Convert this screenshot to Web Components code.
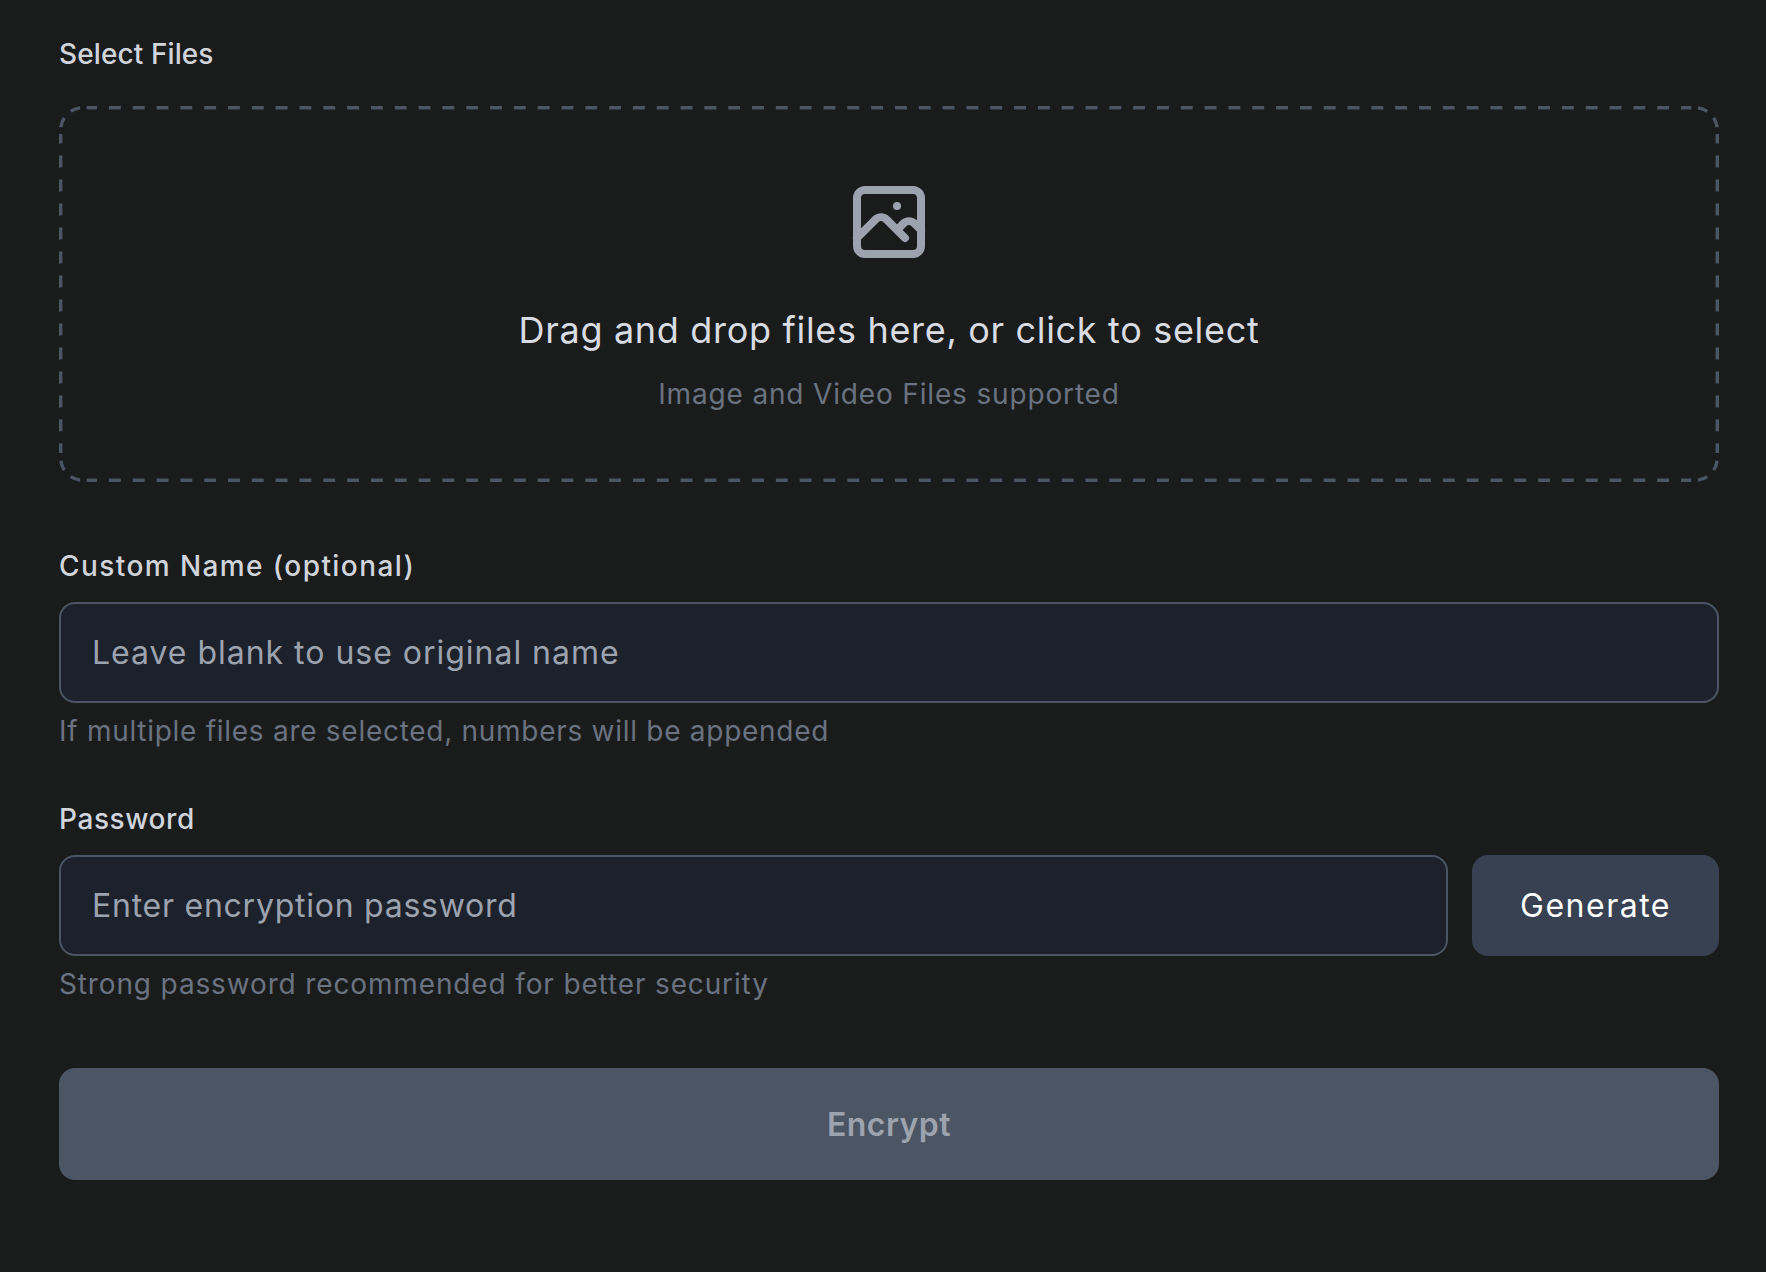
<!DOCTYPE html>
<html lang="en">
<head>
<meta charset="utf-8">
<title>Encrypt</title>
<style>
  html, body { margin: 0; background: #1a1c1c; }
  body { font-family: "Inter", "Liberation Sans", sans-serif; }
</style>
</head>
<body>
<encrypt-form>
  <field-label style="--ls: .1px">Select Files</field-label>
  <drop-zone>
    <span slot="title">Drag and drop files here, or click to select</span>
    <span slot="sub">Image and Video Files supported</span>
  </drop-zone>
  <field-label style="--ls: 1.42px; --mt: 66px">Custom Name (optional)</field-label>
  <text-box style="--ls: .98px">Leave blank to use original name</text-box>
  <field-hint>If multiple files are selected, numbers will be appended</field-hint>
  <field-label style="--ls: .58px; --mt: 52px">Password</field-label>
  <div style="display:flex; gap:24px">
    <text-box style="flex:1; --ls: .75px">Enter encryption password</text-box>
    <action-button>Generate</action-button>
  </div>
  <field-hint style="--ls: .86px">Strong password recommended for better security</field-hint>
  <action-button variant="primary" disabled>Encrypt</action-button>
</encrypt-form>

<script>
  class EncryptForm extends HTMLElement {
    constructor() {
      super();
      this.attachShadow({ mode: 'open' });
      this.shadowRoot.innerHTML = `
        <style>
          :host { display: block; padding: 36px 47px 92px 59px; }
          ::slotted(action-button[variant="primary"]) { margin-top: 66px; }
        </style>
        <slot></slot>
      `;
    }
  }

  class FieldLabel extends HTMLElement {
    constructor() {
      super();
      this.attachShadow({ mode: 'open' });
      this.shadowRoot.innerHTML = `
        <style>
          :host {
            display: block; margin-top: var(--mt, 0);
            font-size: 28px; line-height: 36px; font-weight: 500;
            letter-spacing: var(--ls, 0); color: #d1d5db;
          }
        </style>
        <slot></slot>
      `;
    }
  }

  class DropZone extends HTMLElement {
    constructor() {
      super();
      this.attachShadow({ mode: 'open' });
      // dashes are drawn per side and per corner, a css dashed border gives shorter ones
      this.shadowRoot.innerHTML = `
        <style>
          :host {
            display: flex; flex-direction: column; align-items: center; position: relative;
            box-sizing: border-box; height: 376px; margin-top: 34px; padding-top: 68px;
          }
          .edge { position: absolute; inset: 0; width: 100%; height: 100%; pointer-events: none; }
          .edge path { fill: none; stroke: #4b5563; stroke-width: 3.4; }
          .h { stroke-dasharray: 11.91; stroke-dashoffset: 1.61; }
          .v { stroke-dasharray: 11.99; stroke-dashoffset: 2.39; }
          .arc { stroke-dasharray: 0 3 10 9 10 99; }
          .icon { display: block; width: 96px; height: 96px; color: #9ca3af; }
          .title { margin-top: 36px; font-size: 36px; line-height: 48px; letter-spacing: .68px; color: #d9dce2; }
          .sub { margin-top: 22px; font-size: 28px; line-height: 36px; letter-spacing: .84px; color: #6b7280; }
        </style>
        <svg class="edge" viewBox="0 0 1660 376">
          <path class="h" d="M27.7 1.7H1632.3"/>
          <path class="h" d="M27.7 374.3H1632.3"/>
          <path class="v" d="M1.7 28V347"/>
          <path class="v" d="M1658.3 28V347"/>
          <path class="arc" d="M24 1.7A22.3 22.3 0 0 0 1.7 24"/>
          <path class="arc" d="M1636 1.7A22.3 22.3 0 0 1 1658.3 24"/>
          <path class="arc" d="M24 374.3A22.3 22.3 0 0 1 1.7 352"/>
          <path class="arc" d="M1636 374.3A22.3 22.3 0 0 0 1658.3 352"/>
        </svg>
        <svg class="icon" viewBox="0 0 24 24" fill="none" stroke="currentColor" stroke-width="2" stroke-linecap="round" stroke-linejoin="round">
          <path d="M4 16l4.586-4.586a2 2 0 012.828 0L16 16m-2-2l1.586-1.586a2 2 0 012.828 0L20 14m-6-6h.01M6 20h12a2 2 0 002-2V6a2 2 0 00-2-2H6a2 2 0 00-2 2v12a2 2 0 002 2z"/>
        </svg>
        <div class="title"><slot name="title"></slot></div>
        <div class="sub"><slot name="sub"></slot></div>
      `;
    }
  }

  class TextBox extends HTMLElement {
    constructor() {
      super();
      this.attachShadow({ mode: 'open' });
      this.shadowRoot.innerHTML = `
        <style>
          :host {
            display: flex; align-items: center; box-sizing: border-box;
            height: 101px; margin-top: 18px; padding: 0 31px;
            background: #1c212b; border: 2px solid #4b5563; border-radius: 16px;
            font-size: 32px; letter-spacing: var(--ls, .8px); color: #9ca3af;
          }
        </style>
        <slot></slot>
      `;
    }
  }

  class FieldHint extends HTMLElement {
    constructor() {
      super();
      this.attachShadow({ mode: 'open' });
      this.shadowRoot.innerHTML = `
        <style>
          :host {
            display: block; margin-top: 10px;
            font-size: 28px; line-height: 36px; letter-spacing: var(--ls, .72px); color: #6b7280;
          }
        </style>
        <slot></slot>
      `;
    }
  }

  class ActionButton extends HTMLElement {
    constructor() {
      super();
      this.attachShadow({ mode: 'open' });
      this.shadowRoot.innerHTML = `
        <style>
          :host {
            display: flex; align-items: center; justify-content: center; box-sizing: border-box;
            width: 247px; height: 101px; margin-top: 18px;
            background: #374151; border-radius: 16px;
            font-size: 32px; letter-spacing: 1.5px; color: #fff;
          }
          :host([variant="primary"]) {
            width: auto; height: 112px; background: #4b5563;
            font-weight: 600; color: #9ca3af; letter-spacing: .45px;
          }
        </style>
        <slot></slot>
      `;
    }
  }

  customElements.define('encrypt-form', EncryptForm);
  customElements.define('field-label', FieldLabel);
  customElements.define('drop-zone', DropZone);
  customElements.define('text-box', TextBox);
  customElements.define('field-hint', FieldHint);
  customElements.define('action-button', ActionButton);
</script>
</body>
</html>
